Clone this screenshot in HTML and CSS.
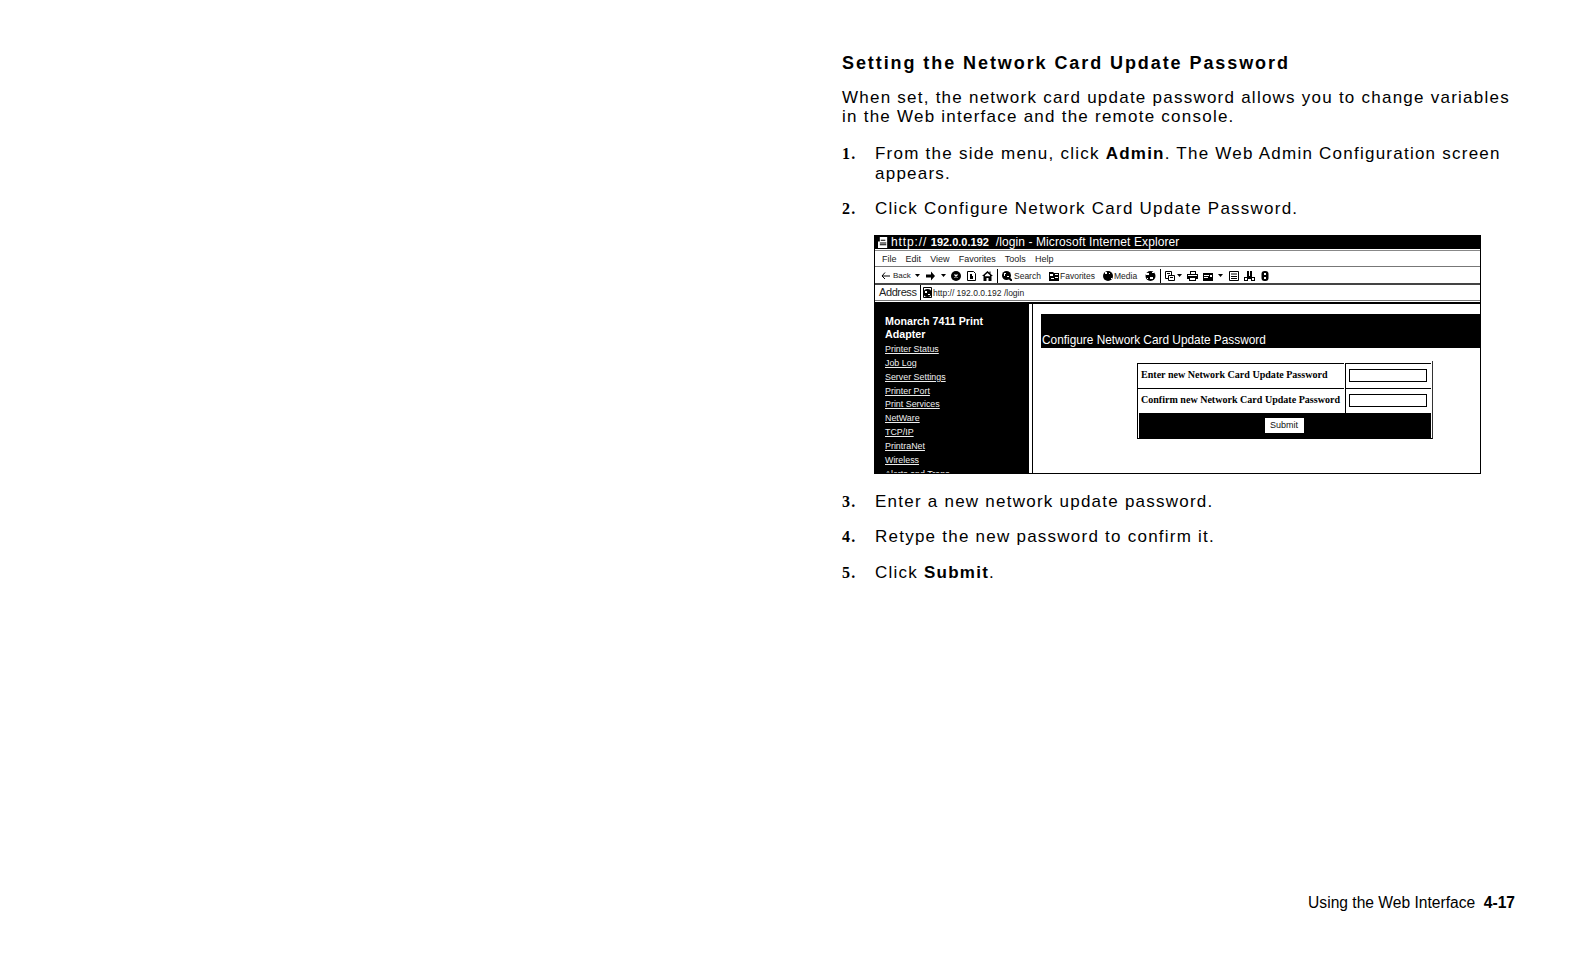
FILE: index.html
```html
<!DOCTYPE html>
<html lang="en">
<head>
<meta charset="utf-8">
<title>Setting the Network Card Update Password</title>
<link rel="stylesheet" href="styles.css">
</head>
<body>
<div class="page">
  <main class="column">
    <h1>Setting the Network Card Update Password</h1>
    <p class="intro">When set, the network card update password allows you to change variables<br>in the Web interface and the remote console.</p>
    <div class="step s1"><span class="num">1.</span><p>From the side menu, click <b>Admin</b>. The Web Admin Configuration screen<br>appears.</p></div>
    <div class="step s2"><span class="num">2.</span><p>Click Configure Network Card Update Password.</p></div>
    <div class="shot">
      <div class="titlebar"><svg class="ti" viewBox="0 0 12 12"><path fill="#fff" d="M2 0h8v12H0V5h2z"/><path fill="#000" d="M3 3h5v1H3zM2 6h7v1H2zM2 8h7v1H2z"/></svg><span class="tt"><span class="proto">http://</span> <b>192.0.0.192</b> &nbsp;/login - Microsoft Internet Explorer</span></div>
      <div class="menubar"><span>File</span><span>Edit</span><span>View</span><span>Favorites</span><span>Tools</span><span>Help</span></div>
      <div class="toolbar">
        <svg class="i w9" viewBox="0 0 9 9"><path fill="none" stroke="#000" d="M4 1L1 4.500l3 3M1 4.500h8"/></svg>
        <span class="tb ml3 t16">Back</span>
        <svg class="caret ml6" viewBox="0 0 5 3"><path d="M0 0h5L2.500 3z"/></svg>
        <svg class="i w9 ml6" viewBox="0 0 9 9"><path d="M0 3h5V0l4 4.500L5 9V6H0z"/></svg>
        <svg class="caret ml6" viewBox="0 0 5 3"><path d="M0 0h5L2.500 3z"/></svg>
        <svg class="i w10 ml5" viewBox="0 0 10 10"><circle cx="5" cy="5" r="5"/><path stroke="#fff" stroke-width="1.200" d="M3.500 3.500l3 3M6.500 3.500l-3 3"/></svg>
        <svg class="i w9 ml6" viewBox="0 0 9 10"><path fill="none" stroke="#000" d="M.5.5h6l2 2v7h-8z"/><path d="M3 3h2v2h1v3H3z"/></svg>
        <svg class="i w11 ml6" viewBox="0 0 11 10"><path d="M5.500 0L0 5h1.500v5h3V7h2v3h3V5H11L8.500 2.700V.5h-1v1.300z"/><path fill="#fff" d="M5.500 2L3 4.300v1h5v-1z"/></svg>
        <i class="sep ml4"></i>
        <svg class="i w10 ml4" viewBox="0 0 10 10"><circle cx="4.500" cy="4.500" r="4.500"/><path stroke="#000" stroke-width="2" d="M7 7l3 3"/><path fill="#fff" d="M2 2h2v1H3v2H2zM5 5h2v1H5z"/></svg>
        <span class="tb ml2 t27">Search</span>
        <svg class="i w10 ml8" viewBox="0 0 10 10"><path d="M0 1h4l1 1h5v8H0z"/><path fill="#fff" d="M6 3h3v1H6zM1 3h3v2H1zM6 6h3v1H6zM2 7h3v1H2z"/></svg>
        <span class="tb ml1 t35">Favorites</span>
        <svg class="i w10 ml8" viewBox="0 0 10 10"><circle cx="5" cy="5" r="5"/><path fill="#fff" d="M2 1h2v2H2zM8 7h1v1H8zM6 2h1v1H6z"/></svg>
        <span class="tb ml1 t23">Media</span>
        <svg class="i w11 ml8" viewBox="0 0 11 10"><circle cx="5.500" cy="5" r="5"/><path fill="#fff" d="M1 2h3v2H1zM7 1h2v1H7zM5 6h3v2H5zM2 7h1v1H2z"/></svg>
        <i class="sep ml4"></i>
        <svg class="i w10 ml4" viewBox="0 0 10 10"><path fill="none" stroke="#000" d="M.5.5h6v7h-6z"/><path fill="#fff" stroke="#000" d="M3.500 4.500h6v5h-6z"/><path d="M2 2h3v1H2zM5 6h3v1H5z"/></svg>
        <svg class="caret ml2" viewBox="0 0 5 3"><path d="M0 0h5L2.500 3z"/></svg>
        <svg class="i w11 ml5" viewBox="0 0 11 10"><path d="M3 0h6v3h2v5H9v2H2V8H0V3h3z"/><path fill="#fff" d="M4 1h4v2H4zM3 7h5v2H3zM1 4h9v1H1z"/></svg>
        <svg class="i w10 ml5" viewBox="0 0 10 10"><path d="M0 2h10v8H0z"/><path fill="#fff" d="M1 4h5v1H1zM1 6h4v1H1zM7 4h2v2H7z"/></svg>
        <svg class="caret ml5" viewBox="0 0 5 3"><path d="M0 0h5L2.500 3z"/></svg>
        <svg class="i w10 ml6" viewBox="0 0 10 10"><path fill="none" stroke="#000" d="M.5.5h9v9h-9z"/><path d="M2 2.500h6v1H2zM2 5h6v1H2zM2 7h6v1H2z"/></svg>
        <svg class="i w11 ml5" viewBox="0 0 11 10"><path d="M3 0h2v5h1V0h2v6h3v4H7V8H4v2H0V6h3z"/><path fill="#fff" d="M1 7h2v2H1zM8 7h2v2H8z"/></svg>
        <svg class="i w10 ml5" viewBox="0 0 10 10"><rect x="1.500" y="0" width="7" height="10" rx="3"/><path fill="#fff" d="M4 2h2v2H4zM4 6h2v2H4z"/></svg>
      </div>
      <div class="addressbar"><span class="al">Address</span><div class="afield"><svg class="ai" viewBox="0 0 11 11"><path fill="none" stroke="#000" d="M1.500.5h8v10h-8z"/><circle cx="5.500" cy="6" r="4"/><path fill="#fff" d="M3 4h2v2H3zM6 7h2v1H6z"/></svg><span>http:// 192.0.0.192 /login</span></div></div>
      <div class="content">
        <nav class="side">
          <div class="brand">Monarch 7411 Print<br>Adapter</div>
          <a>Printer Status</a><a>Job Log</a><a>Server Settings</a><a>Printer Port</a><a>Print Services</a><a>NetWare</a><a>TCP/IP</a><a>PrintraNet</a><a>Wireless</a><a>Alerts and Traps</a>
        </nav>
        <section class="pane">
          <div class="banner">Configure Network Card Update Password</div>
          <div class="form">
            <div class="frow"><div class="flabel">Enter new Network Card Update Password</div><div class="fcell"><span class="input"></span></div></div>
            <div class="frow"><div class="flabel">Confirm new Network Card Update Password</div><div class="fcell"><span class="input"></span></div></div>
            <div class="fsubmit"><span class="btn">Submit</span></div>
          </div>
        </section>
      </div>
    </div>
    <div class="step s3"><span class="num">3.</span><p>Enter a new network update password.</p></div>
    <div class="step s4"><span class="num">4.</span><p>Retype the new password to confirm it.</p></div>
    <div class="step s5"><span class="num">5.</span><p>Click <b>Submit</b>.</p></div>
  </main>
  <footer class="foot">Using the Web Interface&nbsp; <b>4-17</b></footer>
</div>
</body>
</html>
```
FILE: styles.css
```css
html, body { margin: 0; padding: 0; background: #fff; }
body { width: 1572px; height: 954px; overflow: hidden; font-family: "Liberation Sans", Arial, sans-serif; color: #000; }
.page { height: 911px; display: flex; flex-direction: column; padding-left: 842px; box-sizing: border-box; }
.column { flex: 1; padding-top: 53px; }
h1 { margin: 0; font-size: 18px; line-height: 21px; font-weight: 700; letter-spacing: 1.92px; }
.intro { margin: 14px 0 0; font-size: 17px; line-height: 19px; letter-spacing: 1.24px; }
.step { display: flex; font-size: 17px; line-height: 20px; letter-spacing: 1.24px; }
.step p { margin: 0; }
.num { width: 33px; flex: none; font-family: "Liberation Serif", serif; font-weight: 700; font-size: 16px; letter-spacing: 1.300px; }
.s1 { margin-top: 18px; }
.s2 { margin-top: 15px; }
.s3 { margin-top: 18px; }
.s4 { margin-top: 15px; }
.s5 { margin-top: 16px; }
.shot { margin: 16px 0 0 32px; width: 607px; height: 239px; box-sizing: border-box; border: 1px solid #000; border-top: 0; display: flex; flex-direction: column; overflow: hidden; letter-spacing: 0; }
.titlebar { height: 14px; background: #000; color: #fff; display: flex; align-items: center; padding-left: 3px; font-size: 12px; flex: none; white-space: nowrap; }
.ti { width: 11px; height: 11px; margin-right: 2px; flex: none; }
.tt { letter-spacing: 0.1px; }
.proto { letter-spacing: 0.9px; }
.tt b { font-size: 11px; letter-spacing: 0; }
.menubar { height: 17px; margin-top: 1px; flex: none; display: flex; align-items: center; padding-left: 7px; gap: 9.100px; font-size: 9px; box-sizing: border-box; border-top: 1px solid #888; border-bottom: 1px solid #777; color: #222; }
.toolbar { height: 18px; flex: none; display: flex; align-items: center; padding: 1px 0 0 6px; font-size: 8.500px; box-sizing: border-box; border-bottom: 2px solid #444; color: #222; }
.tb { white-space: nowrap; flex: none; }
.i { height: 10px; flex: none; }
.caret { width: 5px; height: 3px; flex: none; }
.w9 { width: 9px; }
.w10 { width: 10px; }
.w11 { width: 11px; }
.t16 { width: 16px; font-size: 8px; }
.t27 { width: 27px; }
.t35 { width: 35px; }
.t23 { width: 23px; }
.ml1 { margin-left: 1px; }
.ml2 { margin-left: 2px; }
.ml3 { margin-left: 3px; }
.ml4 { margin-left: 4px; }
.ml5 { margin-left: 5px; }
.ml6 { margin-left: 6px; }
.ml8 { margin-left: 8px; }
.sep { width: 1px; height: 14px; background: #000; flex: none; }
.addressbar { height: 16px; flex: none; display: flex; align-items: stretch; box-sizing: border-box; border-bottom: 1px solid #777; }
.al { width: 45px; flex: none; font-size: 11px; letter-spacing: -0.400px; line-height: 14px; padding-left: 4px; box-sizing: border-box; color: #222; }
.afield { flex: 1; display: flex; align-items: center; border-left: 1px solid #000; font-size: 8.500px; padding-left: 1px; color: #222; }
.ai { width: 11px; height: 11px; flex: none; }
.content { flex: 1; display: flex; min-height: 0; margin-top: 1px; border-top: 2px solid #000; }
.side { width: 154px; flex: none; background: #000; color: #fff; padding: 11px 0 0 10px; box-sizing: border-box; font-size: 8.900px; overflow: hidden; }
.side a { display: block; height: 13.850px; line-height: 14px; text-decoration: underline; color: #eee; white-space: nowrap; }
.brand { font-size: 10.700px; font-weight: 700; line-height: 13px; margin-bottom: 1px; }
.pane { flex: 1; margin-left: 3px; border-left: 1px solid #000; padding-top: 10px; box-sizing: border-box; min-width: 0; }
.banner { height: 34px; margin-left: 8px; background: #000; color: #fff; font-size: 11.850px; line-height: 14px; padding: 19px 0 0 1px; box-sizing: border-box; }
.form { width: 296px; margin: 13px 0 0 104px; padding-top: 2px; border-right: 1px solid #333; border-bottom: 1px solid #000; box-sizing: border-box; }
.frow { height: 25px; display: flex; }
.flabel { width: 207px; flex: none; box-sizing: border-box; border-left: 1px solid #000; border-top: 1px solid #000; font-family: "Liberation Serif", serif; font-weight: 700; font-size: 10.050px; line-height: 22px; padding-left: 3px; white-space: nowrap; }
.fcell { flex: 1; margin: 0 1px; box-sizing: border-box; border-left: 1px solid #000; border-top: 1px solid #000; padding: 5px 0 0 3px; }
.input { display: block; width: 78px; height: 13px; box-sizing: border-box; border: 1px solid #000; }
.fsubmit { height: 25px; background: #000; background-clip: content-box; margin-right: 1px; padding-left: 1px; display: flex; justify-content: center; align-items: center; border-left: 1px solid #000; box-sizing: border-box; }
.btn { background: #fff; color: #111; font-size: 9px; width: 39px; height: 15px; line-height: 15px; text-align: center; margin-right: 2px; }
.foot { align-self: flex-end; margin-right: 57px; font-size: 15.600px; line-height: 17px; white-space: nowrap; }
```
